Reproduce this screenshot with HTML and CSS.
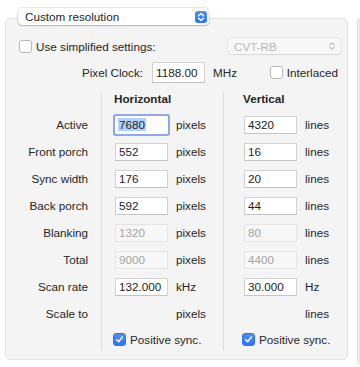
FILE: index.html
```html
<!DOCTYPE html>
<html lang="en">

<head>
  <meta charset="UTF-8">
  <meta name="viewport" content="width=device-width, initial-scale=1.0">
  <title>Custom resolution</title>
  <link rel="stylesheet" href="styles.css">
</head>

<body>
  <div class="page">
    <div class="main">
      <div class="popup">
        <span>Custom resolution</span>
        <span class="stepper">
          <svg width="8" height="10" viewBox="0 0 8 10"><path d="M1.5 3.8 4 1.5 6.5 3.8M1.5 6.2 4 8.5 6.5 6.2" fill="none" stroke="#fff" stroke-width="1.4" stroke-linecap="round" stroke-linejoin="round"/></svg>
        </span>
      </div>
      <div class="box">
        <div class="row-top">
          <label class="check"><span class="cb"></span>Use simplified settings:</label>
          <div class="popup-off">
            <span>CVT-RB</span>
            <svg width="8" height="10" viewBox="0 0 8 10"><path d="M1.8 3.8 4 1.8 6.2 3.8M1.8 6.2 4 8.2 6.2 6.2" fill="none" stroke="#b8b8b8" stroke-width="1.1" stroke-linecap="round" stroke-linejoin="round"/></svg>
          </div>
        </div>
        <div class="row-clock">
          <span class="clock-label">Pixel Clock:</span>
          <span class="field tall">1188.00</span>
          <span class="unit">MHz</span>
          <label class="check interlaced"><span class="cb"></span>Interlaced</label>
        </div>

        <div class="timing">
          <div class="sep sep-h"></div>
          <div class="sep sep-v"></div>

          <div class="head hhead">Horizontal</div>
          <div class="head vhead">Vertical</div>

          <div class="lbl">Active</div>
          <div class="hin"><span class="field focus"><span class="sel">7680</span></span></div>
          <div class="hunit">pixels</div>
          <div class="vin"><span class="field">4320</span></div>
          <div class="vunit">lines</div>

          <div class="lbl">Front porch</div>
          <div class="hin"><span class="field">552</span></div>
          <div class="hunit">pixels</div>
          <div class="vin"><span class="field">16</span></div>
          <div class="vunit">lines</div>

          <div class="lbl">Sync width</div>
          <div class="hin"><span class="field">176</span></div>
          <div class="hunit">pixels</div>
          <div class="vin"><span class="field">20</span></div>
          <div class="vunit">lines</div>

          <div class="lbl">Back porch</div>
          <div class="hin"><span class="field">592</span></div>
          <div class="hunit">pixels</div>
          <div class="vin"><span class="field">44</span></div>
          <div class="vunit">lines</div>

          <div class="lbl">Blanking</div>
          <div class="hin"><span class="field off">1320</span></div>
          <div class="hunit">pixels</div>
          <div class="vin"><span class="field off">80</span></div>
          <div class="vunit">lines</div>

          <div class="lbl">Total</div>
          <div class="hin"><span class="field off">9000</span></div>
          <div class="hunit">pixels</div>
          <div class="vin"><span class="field off">4400</span></div>
          <div class="vunit">lines</div>

          <div class="lbl">Scan rate</div>
          <div class="hin"><span class="field">132.000</span></div>
          <div class="hunit">kHz</div>
          <div class="vin"><span class="field">30.000</span></div>
          <div class="vunit">Hz</div>

          <div class="lbl">Scale to</div>
          <div class="hunit">pixels</div>
          <div class="vunit">lines</div>

          <label class="check sync hhead"><span class="cb on"><svg width="9" height="9" viewBox="0 0 9 9"><path d="M1.6 4.8 3.6 6.8 7.4 2" fill="none" stroke="#fff" stroke-width="1.6" stroke-linecap="round" stroke-linejoin="round"/></svg></span>Positive sync.</label>
          <label class="check sync vhead"><span class="cb on"><svg width="9" height="9" viewBox="0 0 9 9"><path d="M1.6 4.8 3.6 6.8 7.4 2" fill="none" stroke="#fff" stroke-width="1.6" stroke-linecap="round" stroke-linejoin="round"/></svg></span>Positive sync.</label>
        </div>
      </div>
    </div>
    <div class="side"></div>
  </div>
</body>

</html>
```

FILE: styles.css
```css
body,html{
  height:100%;
}
body {
  margin: 0;
  padding: 0;
  background-color: #fff;
  font-family: 'Liberation Sans', Arial, sans-serif;
  font-size: 11.7px;
  color: #262626;
  overflow: hidden;
}

.page {
  display: flex;
  align-items: flex-start;
  gap: 9px;
  padding: 8px 0 0 5px;
}

.main {
  display: flex;
  flex-direction: column;
  width: 343px;
  flex-shrink: 0;
}

/* top popup button */
.popup {
  position: relative;
  z-index: 1;
  display: flex;
  align-items: center;
  justify-content: space-between;
  width: 191px;
  height: 17px;
  margin-left: 13px;
  padding: 0 2px 0 7px;
  box-sizing: border-box;
  background-color: #fff;
  border-radius: 4px;
  box-shadow: 0 0 0 0.5px rgba(0, 0, 0, 0.18), 0 1px 1.5px rgba(0, 0, 0, 0.18);
}

.stepper {
  display: flex;
  align-items: center;
  justify-content: center;
  width: 12px;
  height: 12px;
  border-radius: 3px;
  background: linear-gradient(#4f92fa, #2f72ef);
}

.box {
  margin-top: -7px;
  padding: 19px 6px 8px 13px;
  background-color: #f4f4f4;
  border: 1px solid #e2e2e2;
  border-radius: 5px;
}

.side {
  flex: 1;
  height: 345px;
  margin-top: 10px;
  background-color: #f4f4f4;
  border: 1px solid #e2e2e2;
  border-radius: 5px;
}

/* checkboxes */
.check {
  display: flex;
  align-items: center;
  gap: 4px;
  white-space: nowrap;
}

.cb {
  display: flex;
  align-items: center;
  justify-content: center;
  flex-shrink: 0;
  width: 13px;
  height: 13px;
  box-sizing: border-box;
  background-color: #fff;
  border: 1px solid #b9b9b9;
  border-radius: 3px;
}

.cb.on {
  background: linear-gradient(#4b8ff9, #2f73ef);
  border-color: #2f73ef;
}

.row-top {
  display: flex;
  align-items: center;
  justify-content: space-between;
  height: 16px;
}

.popup-off {
  display: flex;
  align-items: center;
  justify-content: space-between;
  width: 113px;
  height: 16px;
  padding: 0 5px 0 6px;
  box-sizing: border-box;
  color: #b8b8b8;
  background-color: #f7f7f7;
  border-radius: 4px;
  box-shadow: 0 0 0 0.5px rgba(0, 0, 0, 0.08), 0 0.5px 1px rgba(0, 0, 0, 0.08);
}

.row-clock {
  display: flex;
  align-items: center;
  margin-top: 8px;
  height: 21px;
}

.row-clock > * {
  flex-shrink: 0;
}

.clock-label {
  width: 124px;
  text-align: right;
  margin-right: 9px;
}

.row-clock .unit {
  margin-left: 8px;
}

.interlaced {
  margin-left: auto;
  margin-right: 3px;
}

/* fields */
.field {
  display: flex;
  align-items: center;
  width: 53px;
  height: 18px;
  padding-left: 3px;
  box-sizing: border-box;
  background-color: #fff;
  border: 1px solid #d2d2d2;
  border-bottom-color: #c4c4c4;
  color: #1e1e1e;
}

.field.tall {
  height: 21px;
}

.field.off {
  background-color: #f7f7f7;
  border-color: #e4e4e4;
  color: #a3a3a3;
}

.field.focus {
  border-color: #fff;
  border-radius: 1px;
  box-shadow: 0 0 0 2px #8ea6f2;
}

.sel {
  background-color: #b4cffc;
  padding: 0 1px;
  margin-left: -1px;
}

/* timing grid */
.timing {
  display: grid;
  grid-template-columns: 69px 13px 1px 13px 53px 8px 47px 1px 20px 53px 8px auto;
  grid-template-rows: 19px repeat(8, 27px) 24px;
  margin-top: 9px;
}

.sep {
  grid-row: 1 / -1;
  background-color: #dcdcdc;
}

.sep-h {
  grid-column: 3;
}

.sep-v {
  grid-column: 8;
}

.lbl {
  grid-column: 1;
  align-self: center;
  text-align: right;
  white-space: nowrap;
}

.hin {
  grid-column: 5;
  align-self: center;
}

.hunit {
  grid-column: 7;
  align-self: center;
}

.vin {
  grid-column: 10;
  align-self: center;
}

.vunit {
  grid-column: 12;
  align-self: center;
}

.hhead {
  grid-column: 5 / span 3;
}

.vhead {
  grid-column: 10 / span 3;
}

.head {
  align-self: start;
  font-weight: bold;
  margin-left: -1px;
}

.sync {
  align-self: center;
  margin-left: -2px;
}
```
